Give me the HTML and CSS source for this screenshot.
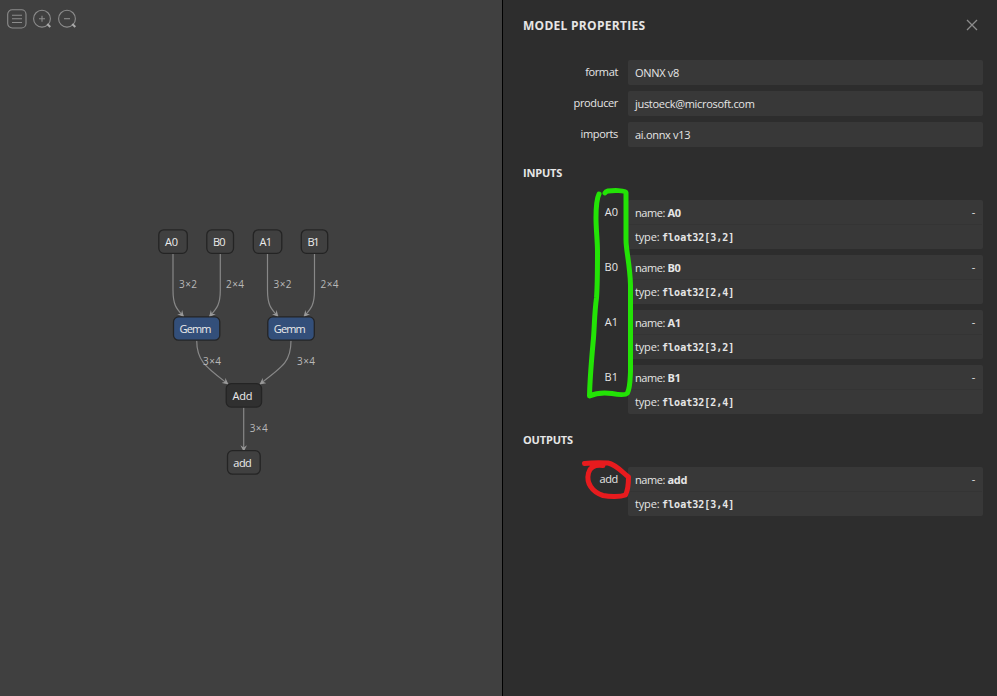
FILE: index.html
```html
<!DOCTYPE html>
<html lang="en">
<head>
<meta charset="utf-8">
<title>Model Properties</title>
<link rel="stylesheet" href="styles.css">
</head>
<body>
<main class="graph">
  <svg class="canvas" width="502" height="696" viewBox="0 0 502 696">
    <defs>
      <marker id="arrow" viewBox="0 0 10 10" refX="9" refY="5" markerWidth="6.5" markerHeight="6.5" markerUnits="userSpaceOnUse" orient="auto"><path class="arrow" d="M0 0L10 5L0 10L3.5 5z"/></marker>
    </defs>
    <g class="edges">
      <path d="M173 253.500V290C173 306 177 309 183.500 316.500"/>
      <path d="M220.300 253.500V290C220.300 306 216 309 209.500 316.500"/>
      <path d="M267.500 253.500V290C267.500 306 271.500 309 278 316.500"/>
      <path d="M314.500 253.500V290C314.500 306 310.500 309 304 316.500"/>
      <path d="M196.700 340.500C196.700 361 206 367 228 384"/>
      <path d="M291 340.500C291 361 284 366 260 384"/>
      <path d="M243.700 407.500V451"/>
    </g>
    <g class="edge-labels">
      <text x="179" y="288" textLength="18">3×2</text>
      <text x="226" y="288" textLength="18">2×4</text>
      <text x="273.500" y="288" textLength="18">3×2</text>
      <text x="320.500" y="288" textLength="18">2×4</text>
      <text x="203" y="365" textLength="18">3×4</text>
      <text x="297" y="365" textLength="18">3×4</text>
      <text x="249.700" y="432" textLength="18">3×4</text>
    </g>
    <g class="nodes">
      <rect x="158.800" y="229.800" width="28.500" height="23.500" rx="5"/>
      <rect x="206.800" y="229.800" width="26.700" height="23.500" rx="5"/>
      <rect x="253.300" y="229.800" width="28.500" height="23.500" rx="5"/>
      <rect x="301.300" y="229.800" width="26.400" height="23.500" rx="5"/>
      <rect class="gemm" x="173.500" y="316.900" width="46.300" height="23.300" rx="5"/>
      <rect class="gemm" x="267.800" y="316.900" width="46.500" height="23.300" rx="5"/>
      <rect class="add" x="226.200" y="383.700" width="35.400" height="23.400" rx="5"/>
      <rect x="227.500" y="450.700" width="32.700" height="23.500" rx="5"/>
    </g>
    <g class="node-labels">
      <text x="165" y="246" textLength="13">A0</text>
      <text x="213" y="246" textLength="12.500">B0</text>
      <text x="259.500" y="246" textLength="12.500">A1</text>
      <text x="307.500" y="246" textLength="12">B1</text>
      <text x="179.500" y="333" textLength="32">Gemm</text>
      <text x="273.800" y="333" textLength="32">Gemm</text>
      <text x="232.500" y="400" textLength="20">Add</text>
      <text x="233.300" y="467" textLength="18.500">add</text>
    </g>
  </svg>
  <nav class="toolbar">
    <svg class="tool" viewBox="0 0 20 20"><rect x=".7" y=".7" width="18.300" height="18.300" rx="4.500"/><path d="M5 6.200H15M5 9.800H15M5 13.500H15"/></svg>
    <svg class="tool" viewBox="0 0 20 20"><circle cx="10" cy="9.700" r="8.400"/><path d="M7 9.700H13M10 6.700V12.700"/><path class="handle" d="M15.300 15L18.300 18"/></svg>
    <svg class="tool" viewBox="0 0 20 20"><circle cx="10" cy="9.700" r="8.400"/><path d="M7 9.700H13"/><path class="handle" d="M15.300 15L18.300 18"/></svg>
  </nav>
</main>
<aside class="sidebar">
  <header class="header"><h1>MODEL PROPERTIES</h1><svg class="close" viewBox="0 0 12 12"><path d="M1 1L11 11M11 1L1 11"/></svg></header>
  <dl class="props">
    <dt>format</dt><dd>ONNX v8</dd>
    <dt>producer</dt><dd>justoeck@microsoft.com</dd>
    <dt>imports</dt><dd>ai.onnx v13</dd>
  </dl>
  <h2>INPUTS</h2>
  <dl class="props">
    <dt class="id">A0</dt><dd class="tensor"><div>name: <b>A0</b><i>-</i></div><div>type: <code>float32[3,2]</code></div></dd>
    <dt class="id">B0</dt><dd class="tensor"><div>name: <b>B0</b><i>-</i></div><div>type: <code>float32[2,4]</code></div></dd>
    <dt class="id">A1</dt><dd class="tensor"><div>name: <b>A1</b><i>-</i></div><div>type: <code>float32[3,2]</code></div></dd>
    <dt class="id">B1</dt><dd class="tensor"><div>name: <b>B1</b><i>-</i></div><div>type: <code>float32[2,4]</code></div></dd>
  </dl>
  <h2>OUTPUTS</h2>
  <dl class="props">
    <dt>add</dt><dd class="tensor"><div>name: <b>add</b><i>-</i></div><div>type: <code>float32[3,4]</code></div></dd>
  </dl>
</aside>
<svg class="ink" width="997" height="696" viewBox="0 0 997 696">
  <path class="green" d="M599 194C596 200 596 210 596 218C596 230 597.500 240 597.500 252C597.500 270 597.500 285 596.500 298C594.500 312 594.500 325 593.500 338C592 355 590 375 589.500 396C596 393 605 392.500 612 393.500C617 394.500 625 396 627.500 393C630 388 630 382 630.500 372V285C630 265 626 250 626 240V192.500C626 190 612 190.500 608 191C606 191.500 605.500 192 605 193"/>
  <path class="red" d="M603 465.500C595 464.500 590 467 588.500 473C586 483 592 492 603 495.500C610 497 620 497 625.500 495C628 490 628.500 484 628.500 477C622 472 616 464.500 608 463C601 462.500 593 462.500 584.500 463.500"/>
</svg>
</body>
</html>
```
FILE: styles.css
```css
* { box-sizing: border-box; }
body {
  margin: 0;
  position: relative;
  display: flex;
  width: 997px;
  height: 696px;
  overflow: hidden;
  background: #404040;
  color: #e6e6e6;
  font: 11px "Open Sans", "Noto Sans", sans-serif;
}
.graph { position: relative; width: 502px; height: 696px; }
.canvas { display: block; }
.toolbar { position: absolute; left: 7px; top: 9px; display: flex; gap: 5px; }
.tool { width: 20px; height: 20px; fill: none; stroke: #8c8c8c; stroke-width: 1.1; }
.tool .handle { stroke: #aaa; stroke-width: 2; }
.edges path { fill: none; stroke: #888; stroke-width: 1.2; marker-end: url(#arrow); }
.edge-labels { font-size: 10px; fill: #b8b8b8; }
.arrow { fill: #999; }
.nodes rect { fill: #404040; stroke: #242424; stroke-width: 1.3; }
.nodes .gemm { fill: #334f7a; }
.nodes .add { fill: #303030; }
.node-labels { font-size: 11px; fill: #ececec; }
.sidebar {
  width: 495px;
  padding: 0 14px 0 20px;
  border-left: 1px solid #000;
  background: #2d2d2d;
}
.header { display: flex; height: 60px; justify-content: space-between; }
h1 { margin: 17px 0 0; font-size: 12px; line-height: 17px; font-weight: 700; letter-spacing: .28px; }
.close { width: 12px; height: 12px; margin: 19px 5px 0 0; fill: none; stroke: #8c8c8c; stroke-width: 1.3; }
h2 { margin: 0; height: 53px; padding-top: 18px; font-size: 11px; line-height: 16px; font-weight: 700; letter-spacing: -.18px; }
.props {
  display: grid;
  grid-template-columns: 95px 355px;
  column-gap: 10px;
  row-gap: 6px;
  margin: 0;
}
dt { text-align: right; line-height: 24px; letter-spacing: -.36px; }
.id { letter-spacing: 0; }
dd { margin: 0; height: 25px; padding-left: 7px; line-height: 25px; background: #383838; border-radius: 2px; letter-spacing: -.3px; }
.tensor { height: 49px; padding: 0; }
.tensor div { display: flex; height: 24px; padding: 0 8px 0 7px; white-space: pre; letter-spacing: -.4px; }
.tensor div + div { height: 25px; margin: 0 1px; padding-left: 6px; line-height: 24px; border-top: 1px solid #343434; letter-spacing: -.17px; }
b { font-weight: 700; }
i { margin-left: auto; font-style: normal; line-height: 23px; }
code { font: bold 10px/25px "DejaVu Sans Mono", monospace; letter-spacing: 0; }
.ink { position: absolute; left: 0; top: 0; fill: none; stroke-width: 5; stroke-linecap: round; stroke-linejoin: round; }
.green { stroke: #23e306; }
.red { stroke: #e71b1e; }
```
